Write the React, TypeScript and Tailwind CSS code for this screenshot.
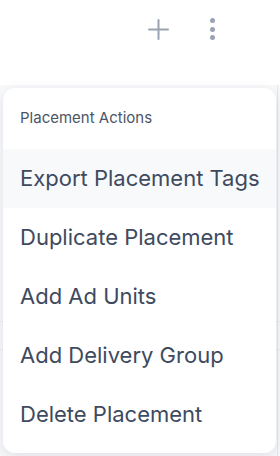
import React from 'react';

const items = [
  'Export Placement Tags',
  'Duplicate Placement',
  'Add Ad Units',
  'Add Delivery Group',
  'Delete Placement',
];

export default function App() {
  return (
    <div className="relative w-[280px] h-[456px] overflow-hidden bg-[#f8f9fb] font-['Inter',sans-serif]">
      {/* top bar */}
      <div className="h-[85px] bg-white flex items-start justify-end pr-[62px] pt-[14px] gap-[33px]">
        <button className="w-[30px] h-[30px] flex items-center justify-center text-[#9aa3b2]">
          <svg width="21" height="21" viewBox="0 0 21 21" fill="none" stroke="currentColor" strokeWidth="2" strokeLinecap="round">
            <path d="M10.5 1v19M1 10.5h19" />
          </svg>
        </button>
        <button className="w-[12px] h-[30px] flex flex-col items-center justify-center gap-[3.5px]">
          <span className="w-[5px] h-[5px] rounded-full bg-[#9aa3b2]" />
          <span className="w-[5px] h-[5px] rounded-full bg-[#9aa3b2]" />
          <span className="w-[5px] h-[5px] rounded-full bg-[#9aa3b2]" />
        </button>
      </div>

      {/* faint row lines behind the menu */}
      <div className="absolute left-0 right-0 top-[321px] h-px bg-[#eceef2]" />
      <div className="absolute left-0 right-0 top-[349px] h-px bg-[#eceef2]" />
      <div className="absolute right-[2px] top-[85px] bottom-0 w-px bg-[#e3e7ee]" />

      {/* menu */}
      <div className="absolute left-[3px] top-[88px] w-[273px] bg-white rounded-[12px] shadow-[0_4px_14px_rgba(15,23,42,0.10)] pb-[9px] overflow-hidden">
        <div className="h-[61px] flex items-center px-[17px] text-[15px] text-[#4b5565] whitespace-nowrap">
          Placement Actions
        </div>
        {items.map((label, i) => (
          <div
            key={label}
            className={
              i === 0
                ? 'h-[59px] flex items-center px-[17px] text-[22px] text-[#3e4a5e] bg-[#f8f9fb] whitespace-nowrap'
                : 'h-[59px] flex items-center px-[17px] text-[22px] text-[#3e4a5e] whitespace-nowrap'
            }
          >
            {label}
          </div>
        ))}
      </div>
    </div>
  );
}
